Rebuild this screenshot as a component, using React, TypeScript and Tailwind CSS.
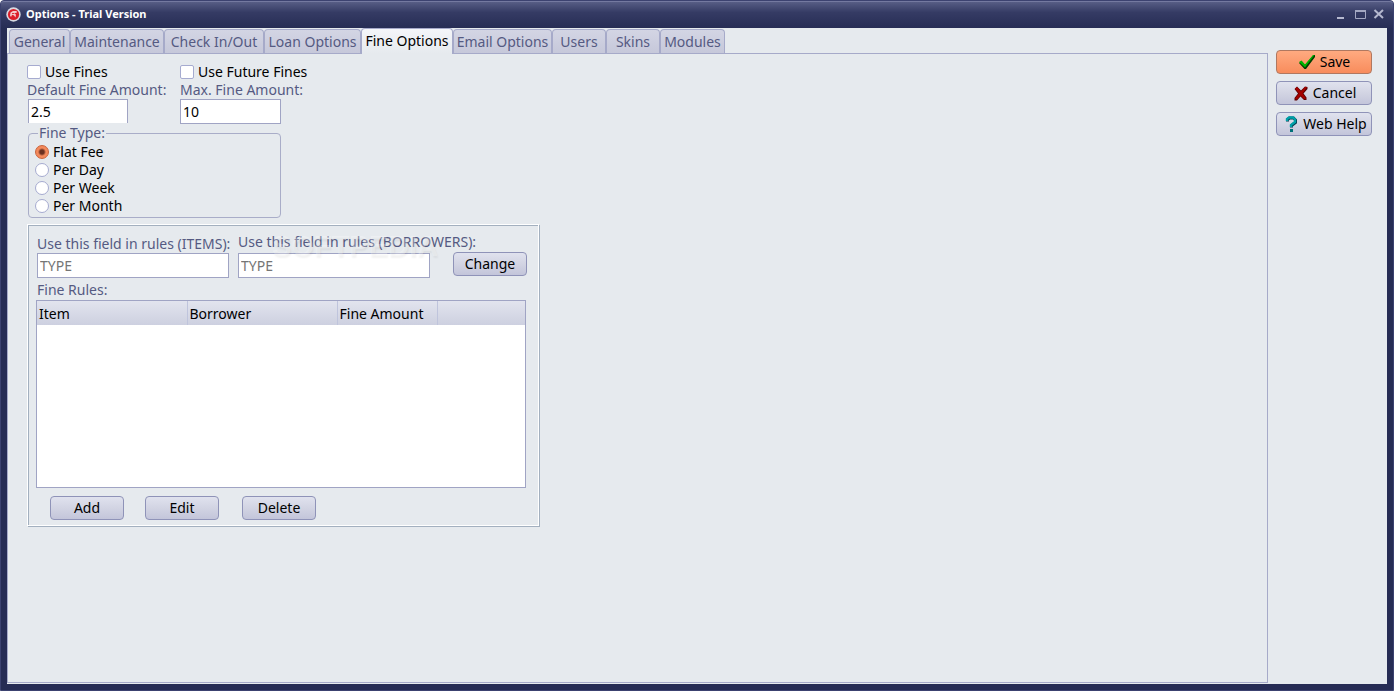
import React from "react";

const tabs = [
  { name: "General", width: "w-[61px]" },
  { name: "Maintenance", width: "w-[94px]" },
  { name: "Check In/Out", width: "w-[100px]" },
  { name: "Loan Options", width: "w-[97px]" },
  { name: "Fine Options", width: "w-[92px]" },
  { name: "Email Options", width: "w-[99px]" },
  { name: "Users", width: "w-[54px]" },
  { name: "Skins", width: "w-[54px]" },
  { name: "Modules", width: "w-[65px]" },
];

const buttonBase =
  "flex h-[24px] items-center justify-center rounded-[4px] border whitespace-nowrap text-black ";
const buttonSkin =
  "border-[#8f93b8] bg-linear-to-b from-[#e0e2ee] via-[#d2d4e3] to-[#c3c5da] ";
const fieldSkin = "border border-[#a0a4c4] bg-white px-[2px] outline-none ";

function AppIcon() {
  return (
    <svg width="15" height="15" viewBox="0 0 15 15" aria-hidden="true">
      <circle cx="7.5" cy="7.5" r="7.2" fill="#d9dae2" />
      <circle cx="7.5" cy="7.5" r="5.6" fill="#dc1f2a" />
      <path d="M4 8.5L4.500 5.500L7 4H10.500L11 5.500L8 6.500L10 7.500L9.500 10.500L8 8.500L6 8L5 10Z" fill="#f3c9cb" />
      <path d="M6 6.500H8M6 8L8 9.500" fill="none" stroke="#dc1f2a" strokeWidth="0.900" />
    </svg>
  );
}

function CheckMark() {
  return (
    <svg width="18" height="16" viewBox="0 0 18 16" aria-hidden="true">
      <path d="M1 9L3.5 7L7 11L15.5 1H17V3L8 15H6.500Z" fill="#003c00" />
      <path d="M1 8L3.500 6.500L7 10.500L15 1H16.500L7 13.500Z" fill="#00b400" />
    </svg>
  );
}

function CrossMark() {
  return (
    <svg width="14" height="15" viewBox="0 0 14 15" aria-hidden="true">
      <path d="M0.500 3L3 0.500L7 4.500L11 0.500L13.500 1V3L9.500 7.500L12.500 11.500V14H10L6.500 10.500L3 14.500H0.500V12L4 7.500Z" fill="#5c0000" />
      <path d="M1 2.500L3 1L7 5.500L11 1H13L8.500 7.500L12 12.500L10 13L6.500 9.500L3 13.500L1 12.500L5 7.500Z" fill="#a40000" />
    </svg>
  );
}

function QuestionMark() {
  return (
    <svg width="13" height="17" viewBox="0 0 13 17" aria-hidden="true">
      <path d="M2.500 5.500V3.500L4.500 2H8.500L10.500 4V6.500L6.500 9.500V11.500" fill="none" stroke="#003c50" strokeWidth="3" />
      <path d="M2 5V3L4 1.500H8L10 3.500V6L6 9V11" fill="none" stroke="#00a0a8" strokeWidth="2.400" />
      <path d="M5 13H8V16H5Z" fill="#007078" />
    </svg>
  );
}

function TextCheck({ label }: { label: string }) {
  return (
    <label className="flex h-[18px] items-center gap-1 text-black">
      <input type="checkbox" className="size-[14px] appearance-none rounded-[2px] border border-[#a6abd0] bg-white" />
      {label}
    </label>
  );
}

export default function App() {
  return (
    <div className="flex min-h-screen flex-col rounded-t-[4px] border border-[#3c4270] bg-[#262c54] font-['Noto_Sans',sans-serif] text-[14px] leading-[18px] text-[#555a82]">
      <header className="flex h-[27px] shrink-0 items-center justify-between rounded-t-[3px] border-t border-[#7479a0] bg-linear-to-b from-[#575d85] from-0% via-[#353b64] via-40% to-[#272d55] pr-[8px] pb-[2px] pl-[5px]">
        <div className="flex items-center gap-[5px]">
          <AppIcon />
          <h1 className="text-[11px] leading-[14px] font-bold text-white">Options - Trial Version</h1>
        </div>
        <div className="flex gap-[7px]">
          <button aria-label="Minimize">
            <svg width="12" height="12" viewBox="0 0 12 12"><path d="M2 10H9" stroke="#b5b8cf" strokeWidth="2" /></svg>
          </button>
          <button aria-label="Maximize">
            <svg width="12" height="12" viewBox="0 0 12 12"><path d="M1 3H12" stroke="#a3a7c2" strokeWidth="2" /><path d="M1.500 3V10.500H11.500V3" fill="none" stroke="#a3a7c2" /></svg>
          </button>
          <button aria-label="Close">
            <svg width="12" height="12" viewBox="0 0 12 12"><path d="M1.500 2L10 10M10 2L1.500 10" stroke="#b5b8cf" strokeWidth="2" /></svg>
          </button>
        </div>
      </header>

      <main className="mx-[6px] mb-[6px] flex flex-1 bg-[#e6eaee]">
        <div className="flex flex-1 flex-col">
          <div role="tablist" className="flex h-[25px] items-end pl-[2px]">
            {tabs.map((tab) => {
              const active = tab.name === "Fine Options";
              return (
                <button
                  key={tab.name}
                  role="tab"
                  aria-selected={active}
                  className={
                    tab.width +
                    " flex shrink-0 items-center justify-center rounded-t-[4px] border border-b-0 border-[#a6aac9] whitespace-nowrap " +
                    (active
                      ? "z-10 -mb-px h-[26px] bg-linear-to-b from-[#f4f5f9] to-[#e6eaee] pb-px text-black"
                      : "h-[24px] bg-linear-to-b from-[#d3d5e4] to-[#c6c8da] text-[#555a82]")
                  }
                >
                  {tab.name}
                </button>
              );
            })}
          </div>

          <section className="mb-px flex-1 border border-[#a6aac9] pl-[19px]">
            <div className="flex pt-[9px]">
              <div className="w-[153px]">
                <TextCheck label="Use Fines" />
                <label htmlFor="default-fine" className="block whitespace-nowrap">Default Fine Amount:</label>
                <input id="default-fine" defaultValue="2.5" className={fieldSkin + "ml-px block h-[24px] w-[100px] border-b-0 text-black"} />
              </div>
              <div>
                <TextCheck label="Use Future Fines" />
                <label htmlFor="max-fine" className="block whitespace-nowrap">Max. Fine Amount:</label>
                <input id="max-fine" defaultValue="10" className={fieldSkin + "block h-[25px] w-[101px] text-black"} />
              </div>
            </div>

            <fieldset className="ml-px w-[253px] rounded-[4px] border border-[#a9adc8] px-[6px] pt-px pb-[2px]">
              <legend className="ml-[3px] px-px leading-[18px]">Fine Type:</legend>
              {["Flat Fee", "Per Day", "Per Week", "Per Month"].map((name, i) => (
                <label key={name} className="flex h-[18px] items-center gap-1 text-black">
                  <input
                    type="radio"
                    name="fine-type"
                    defaultChecked={i === 0}
                    className="size-[14px] appearance-none rounded-full border border-[#a6abd0] bg-white checked:border-[#c8623a] checked:bg-[radial-gradient(circle,#6b3020_0_2px,#f48a5c_4px)]"
                  />
                  {name}
                </label>
              ))}
            </fieldset>

            <div className="relative mt-[6px] w-[512px] border border-white px-[8px] pt-[8px] pb-[5px] shadow-[inset_1px_1px_0_#a3b0bf,1px_1px_0_#a3b0bf]">
              <div className="flex items-end pl-px">
                <div className="w-[201px]">
                  <label htmlFor="item-field" className="block whitespace-nowrap">Use this field in rules (ITEMS):</label>
                  <input id="item-field" defaultValue="TYPE" className={fieldSkin + "block h-[25px] w-[192px] text-[#757575]"} />
                </div>
                <div className="w-[215px]">
                  <label htmlFor="borrower-field" className="block whitespace-nowrap">Use this field in rules (BORROWERS):</label>
                  <input id="borrower-field" defaultValue="TYPE" className={fieldSkin + "mt-[2px] block h-[25px] w-[192px] text-[#757575]"} />
                </div>
                <button className={buttonBase + buttonSkin + "mb-[2px] w-[74px] shrink-0"}>Change</button>
              </div>

              <h2 className="mt-[3px] pl-px">Fine Rules:</h2>
              <div className="mt-px h-[188px] w-[490px] border border-[#a0a4c4] bg-white">
                <table className="w-full table-fixed">
                  <thead>
                    <tr className="h-[24px] bg-linear-to-b from-[#e2e4ee] to-[#cdd0e0] text-left text-black">
                      <th className="w-[150px] border-r border-[#bfc4dc] px-[2px] pt-[2px] font-normal">Item</th>
                      <th className="w-[150px] border-r border-[#bfc4dc] px-[2px] pt-[2px] font-normal">Borrower</th>
                      <th className="w-[100px] border-r border-[#bfc4dc] px-[2px] pt-[2px] font-normal whitespace-nowrap">Fine Amount</th>
                      <th></th>
                    </tr>
                  </thead>
                </table>
              </div>

              <div className="mt-[8px] flex pl-[14px]">
                <button className={buttonBase + buttonSkin + "mr-[21px] w-[74px]"}>Add</button>
                <button className={buttonBase + buttonSkin + "mr-[23px] w-[74px]"}>Edit</button>
                <button className={buttonBase + buttonSkin + "w-[74px]"}>Delete</button>
              </div>

              <span aria-hidden="true" className="pointer-events-none absolute top-[5px] left-[244px] font-['Liberation_Sans',sans-serif] text-[29px] leading-[32px] font-bold text-white/30 [text-shadow:1px_2px_2px_rgb(0_0_0/0.05)]">
                SOFTPEDIA
              </span>
            </div>
          </section>
        </div>

        <aside className="mr-[15px] ml-[8px] flex w-[96px] flex-col gap-[7px] pt-[22px]">
          <button className={buttonBase + "gap-[4px] border-[#b07860] bg-linear-to-b from-[#ffaa80] to-[#f88c5c]"}>
            <CheckMark />
            Save
          </button>
          <button className={buttonBase + buttonSkin + "gap-[5px] pl-[2px]"}>
            <CrossMark />
            Cancel
          </button>
          <button className={buttonBase + buttonSkin + "gap-[5px] pl-[4px]"}>
            <QuestionMark />
            Web Help
          </button>
        </aside>
      </main>
    </div>
  );
}
